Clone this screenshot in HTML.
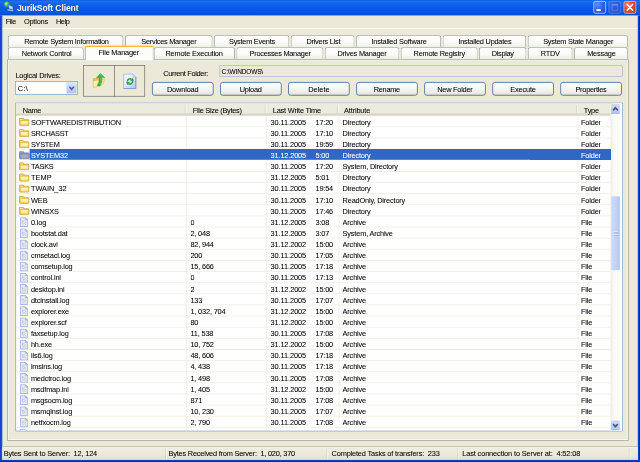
<!DOCTYPE html>
<html><head><meta charset="utf-8"><title>JurikSoft Client</title>
<style>
html,body{margin:0;padding:0;width:640px;height:462px;overflow:hidden;background:#ECE9D8}
#r{position:absolute;left:0;top:0;width:6400px;height:4620px;transform:scale(0.1);transform-origin:0 0;will-change:transform;font-family:'Liberation Sans', 'DejaVu Sans', sans-serif;font-size:70px;overflow:hidden}
#r div,#r svg{position:absolute;display:block}
.t{white-space:pre;-webkit-text-stroke-width:0.6px}
</style></head>
<body>
<div id="r">
<div style="left:0px;top:0px;width:6400px;height:154px;background:linear-gradient(to bottom,#0C56DE 0%,#1F74F2 7%,#1568EE 18%,#0B5FE8 35%,#0759E3 60%,#0657E2 85%,#0547CA 100%)"></div>
<div style="left:0px;top:154px;width:23px;height:4466px;background:linear-gradient(to right,#0A2FD2 0%,#1459E6 45%,#0B49D8 100%)"></div>
<div style="left:6378px;top:154px;width:22px;height:4466px;background:linear-gradient(to right,#0B49D8 0%,#0B3BD2 50%,#0419B8 100%)"></div>
<div style="left:0px;top:4598px;width:6400px;height:22px;background:linear-gradient(to bottom,#0B49D8 0%,#0B3BD2 50%,#0419B8 100%)"></div>
<svg style="left:30px;top:8px;width:110px;height:110px" viewBox="0 0 110 110">
<defs><radialGradient id="gl" cx="45%" cy="40%" r="60%"><stop offset="0" stop-color="#3FA8EA"/><stop offset=".6" stop-color="#1E74D6"/><stop offset="1" stop-color="#1450B8"/></radialGradient>
<radialGradient id="gg" cx="45%" cy="40%" r="60%"><stop offset="0" stop-color="#B4F58A"/><stop offset=".6" stop-color="#55C848"/><stop offset="1" stop-color="#2F9E3C"/></radialGradient></defs>
<circle cx="46" cy="46" r="41" fill="url(#gl)"/>
<path d="M10 30 Q22 4 50 6 Q62 10 58 22 Q52 30 46 40 Q44 56 34 62 Q18 52 10 30Z" fill="url(#gg)"/>
<path d="M64 14 Q82 22 86 40 Q78 46 70 38 Q62 28 64 14Z" fill="#1F8E3A"/>
<path d="M30 66 Q40 80 56 84 L52 70 Z" fill="#1846A8"/>
<path d="M58 46 L92 56 L100 84 L62 76Z" fill="#D3E3F8" stroke="#7FA4DC" stroke-width="4"/>
<path d="M44 84 L100 92 L104 102 L48 96Z" fill="#E4EEFB" stroke="#5D83C8" stroke-width="3"/>
</svg>
<div class="t" style="left:169px;top:14.5px;height:120px;line-height:120px;font-size:87px;color:#0A2A80;white-space:pre;font-weight:bold;letter-spacing:-1.74px;opacity:.7;margin-left:5px;margin-top:6px;">JurikSoft Client</div>
<div class="t" style="left:169px;top:14.5px;height:120px;line-height:120px;font-size:87px;color:#fff;white-space:pre;font-weight:bold;letter-spacing:-1.74px;-webkit-text-stroke-width:0;">JurikSoft Client</div>
<div style="left:5934px;top:10px;width:126px;height:126px;background:radial-gradient(circle at 30% 25%,#5C94F5 0%,#2B62E0 50%,#1E4BCB 100%);border:7px solid #DCE6FA;border-radius:20px;box-sizing:border-box"></div>
<div style="left:5964px;top:92px;width:44px;height:18px;background:#fff"></div>
<div style="left:6085px;top:10px;width:126px;height:126px;background:linear-gradient(135deg,#3C6FE6 0%,#2A5BDB 50%,#2450CC 100%);border:7px solid #5F8CEB;border-radius:20px;box-sizing:border-box"></div>
<div style="left:6117px;top:40px;width:64px;height:66px;border:6px solid #6E93E8;border-top-width:14px;box-sizing:border-box"></div>
<div style="left:6236px;top:10px;width:126px;height:126px;background:radial-gradient(circle at 30% 25%,#EE8A68 0%,#E04A26 40%,#C2351A 100%);border:7px solid #F3D9D0;border-radius:20px;box-sizing:border-box"></div>
<svg style="left:6236px;top:10px;width:126px;height:126px" viewBox="0 0 126 126"><path d="M36 34 L90 92 M90 34 L36 92" stroke="#fff" stroke-width="15" stroke-linecap="round"/></svg>
<div class="t" style="left:57px;top:151.5px;height:120px;line-height:120px;font-size:74px;color:#000;white-space:pre;letter-spacing:-4.00px;">File</div>
<div class="t" style="left:239px;top:151.5px;height:120px;line-height:120px;font-size:74px;color:#000;white-space:pre;letter-spacing:-2.00px;">Options</div>
<div class="t" style="left:559px;top:151.5px;height:120px;line-height:120px;font-size:74px;color:#000;white-space:pre;letter-spacing:-4.00px;">Help</div>
<div style="left:23px;top:282px;width:6355px;height:8px;background:#fff"></div>
<div style="left:79px;top:353px;width:1154px;height:123px;background:linear-gradient(to bottom,#FFFFFF 0%,#FAFAF7 55%,#EEEDE3 100%);border:7px solid #939CA0;border-bottom:none;border-radius:22px 22px 0 0;box-sizing:border-box"></div>
<div class="t" style="left:-335.5px;width:2000px;text-align:center;top:357px;height:120px;line-height:120px;font-size:74px;color:#000;white-space:pre;letter-spacing:-2.92px;">Remote System Information</div>
<div style="left:1250px;top:353px;width:875px;height:123px;background:linear-gradient(to bottom,#FFFFFF 0%,#FAFAF7 55%,#EEEDE3 100%);border:7px solid #939CA0;border-bottom:none;border-radius:22px 22px 0 0;box-sizing:border-box"></div>
<div class="t" style="left:688.6px;width:2000px;text-align:center;top:357px;height:120px;line-height:120px;font-size:74px;color:#000;white-space:pre;letter-spacing:-2.90px;">Services Manager</div>
<div style="left:2139px;top:353px;width:754px;height:123px;background:linear-gradient(to bottom,#FFFFFF 0%,#FAFAF7 55%,#EEEDE3 100%);border:7px solid #939CA0;border-bottom:none;border-radius:22px 22px 0 0;box-sizing:border-box"></div>
<div class="t" style="left:1519.2px;width:2000px;text-align:center;top:357px;height:120px;line-height:120px;font-size:74px;color:#000;white-space:pre;letter-spacing:-2.66px;">System Events</div>
<div style="left:2907px;top:353px;width:638px;height:123px;background:linear-gradient(to bottom,#FFFFFF 0%,#FAFAF7 55%,#EEEDE3 100%);border:7px solid #939CA0;border-bottom:none;border-radius:22px 22px 0 0;box-sizing:border-box"></div>
<div class="t" style="left:2233.7px;width:2000px;text-align:center;top:357px;height:120px;line-height:120px;font-size:74px;color:#000;white-space:pre;letter-spacing:-2.67px;">Drivers List</div>
<div style="left:3561px;top:353px;width:850px;height:123px;background:linear-gradient(to bottom,#FFFFFF 0%,#FAFAF7 55%,#EEEDE3 100%);border:7px solid #939CA0;border-bottom:none;border-radius:22px 22px 0 0;box-sizing:border-box"></div>
<div class="t" style="left:2990.5px;width:2000px;text-align:center;top:357px;height:120px;line-height:120px;font-size:74px;color:#000;white-space:pre;letter-spacing:-1.96px;">Installed Software</div>
<div style="left:4426px;top:353px;width:836px;height:123px;background:linear-gradient(to bottom,#FFFFFF 0%,#FAFAF7 55%,#EEEDE3 100%);border:7px solid #939CA0;border-bottom:none;border-radius:22px 22px 0 0;box-sizing:border-box"></div>
<div class="t" style="left:3848.8px;width:2000px;text-align:center;top:357px;height:120px;line-height:120px;font-size:74px;color:#000;white-space:pre;letter-spacing:-2.46px;">Installed Updates</div>
<div style="left:5277px;top:353px;width:1002px;height:123px;background:linear-gradient(to bottom,#FFFFFF 0%,#FAFAF7 55%,#EEEDE3 100%);border:7px solid #939CA0;border-bottom:none;border-radius:22px 22px 0 0;box-sizing:border-box"></div>
<div class="t" style="left:4781.2px;width:2000px;text-align:center;top:357px;height:120px;line-height:120px;font-size:74px;color:#000;white-space:pre;letter-spacing:-2.68px;">System State Manager</div>
<div style="left:79px;top:473px;width:759px;height:121px;background:linear-gradient(to bottom,#FFFFFF 0%,#FAFAF7 55%,#EEEDE3 100%);border:7px solid #939CA0;border-bottom:none;border-radius:22px 22px 0 0;box-sizing:border-box"></div>
<div class="t" style="left:-533.6px;width:2000px;text-align:center;top:476px;height:120px;line-height:120px;font-size:74px;color:#000;white-space:pre;letter-spacing:-2.23px;">Network Control</div>
<div style="left:1538px;top:473px;width:812px;height:121px;background:linear-gradient(to bottom,#FFFFFF 0%,#FAFAF7 55%,#EEEDE3 100%);border:7px solid #939CA0;border-bottom:none;border-radius:22px 22px 0 0;box-sizing:border-box"></div>
<div class="t" style="left:940.5px;width:2000px;text-align:center;top:476px;height:120px;line-height:120px;font-size:74px;color:#000;white-space:pre;letter-spacing:-1.98px;">Remote Execution</div>
<div style="left:2364px;top:473px;width:870px;height:121px;background:linear-gradient(to bottom,#FFFFFF 0%,#FAFAF7 55%,#EEEDE3 100%);border:7px solid #939CA0;border-bottom:none;border-radius:22px 22px 0 0;box-sizing:border-box"></div>
<div class="t" style="left:1801.1px;width:2000px;text-align:center;top:476px;height:120px;line-height:120px;font-size:74px;color:#000;white-space:pre;letter-spacing:-2.77px;">Processes Manager</div>
<div style="left:3247px;top:473px;width:747px;height:121px;background:linear-gradient(to bottom,#FFFFFF 0%,#FAFAF7 55%,#EEEDE3 100%);border:7px solid #939CA0;border-bottom:none;border-radius:22px 22px 0 0;box-sizing:border-box"></div>
<div class="t" style="left:2619.8px;width:2000px;text-align:center;top:476px;height:120px;line-height:120px;font-size:74px;color:#000;white-space:pre;letter-spacing:-2.31px;">Drives Manager</div>
<div style="left:4007px;top:473px;width:769px;height:121px;background:linear-gradient(to bottom,#FFFFFF 0%,#FAFAF7 55%,#EEEDE3 100%);border:7px solid #939CA0;border-bottom:none;border-radius:22px 22px 0 0;box-sizing:border-box"></div>
<div class="t" style="left:3392.2px;width:2000px;text-align:center;top:476px;height:120px;line-height:120px;font-size:74px;color:#000;white-space:pre;letter-spacing:-2.54px;">Remote Registry</div>
<div style="left:4789px;top:473px;width:475px;height:121px;background:linear-gradient(to bottom,#FFFFFF 0%,#FAFAF7 55%,#EEEDE3 100%);border:7px solid #939CA0;border-bottom:none;border-radius:22px 22px 0 0;box-sizing:border-box"></div>
<div class="t" style="left:4027px;width:2000px;text-align:center;top:476px;height:120px;line-height:120px;font-size:74px;color:#000;white-space:pre;letter-spacing:-3.09px;">Display</div>
<div style="left:5278px;top:473px;width:447px;height:121px;background:linear-gradient(to bottom,#FFFFFF 0%,#FAFAF7 55%,#EEEDE3 100%);border:7px solid #939CA0;border-bottom:none;border-radius:22px 22px 0 0;box-sizing:border-box"></div>
<div class="t" style="left:4502.4px;width:2000px;text-align:center;top:476px;height:120px;line-height:120px;font-size:74px;color:#000;white-space:pre;letter-spacing:-2.28px;">RTDV</div>
<div style="left:5740px;top:473px;width:539px;height:121px;background:linear-gradient(to bottom,#FFFFFF 0%,#FAFAF7 55%,#EEEDE3 100%);border:7px solid #939CA0;border-bottom:none;border-radius:22px 22px 0 0;box-sizing:border-box"></div>
<div class="t" style="left:5013.8px;width:2000px;text-align:center;top:476px;height:120px;line-height:120px;font-size:74px;color:#000;white-space:pre;letter-spacing:-2.32px;">Message</div>
<div style="left:72px;top:594px;width:6216px;height:3813px;border:7px solid #98A1A4;box-sizing:border-box;box-shadow:inset 0 0 0 7px #FBFBF8"></div>
<div style="left:849px;top:456px;width:687px;height:150px;background:#FCFCFA;border:7px solid #939CA0;border-bottom:none;border-radius:22px 22px 0 0;box-sizing:border-box"></div>
<div style="left:849px;top:456px;width:687px;height:15px;background:linear-gradient(to bottom,#F0982C,#FFC94A);border-radius:22px 22px 0 0"></div>
<div class="t" style="left:187.3px;width:2000px;text-align:center;top:465.5px;height:120px;line-height:120px;font-size:74px;color:#000;white-space:pre;letter-spacing:-2.40px;">File Manager</div>
<div class="t" style="left:154px;top:694px;height:120px;line-height:120px;font-size:74px;color:#000;white-space:pre;letter-spacing:-2.22px;">Logical Drives:</div>
<div style="left:152px;top:812px;width:628px;height:136px;background:#fff;border:7px solid #7F9DB9;box-sizing:border-box"></div>
<div class="t" style="left:178px;top:824.5px;height:120px;line-height:120px;font-size:74px;color:#000;white-space:pre;letter-spacing:2.48px;">C:\</div>
<div style="left:664px;top:823px;width:105px;height:114px;background:linear-gradient(to bottom,#DCE6FD 0%,#C3D3FB 50%,#AFC3F4 100%);border-radius:10px;border:5px solid #B7C9F7;box-sizing:border-box"></div>
<svg style="left:664px;top:823px;width:105px;height:114px" viewBox="0 0 105 114"><path d="M30 45 L52 70 L75 45" fill="none" stroke="#4D6185" stroke-width="15"/></svg>
<div style="left:831px;top:651px;width:620px;height:315px;border:7px solid #6E6D66;box-sizing:border-box"></div>
<div style="left:1140.5px;top:651px;width:7px;height:315px;background:#6E6D66"></div>
<svg style="left:910px;top:720px;width:160px;height:180px" viewBox="0 0 160 180">
<defs><linearGradient id="fy" x1="0" y1="0" x2="1" y2="1"><stop offset="0" stop-color="#FFFBD8"/><stop offset=".5" stop-color="#FBE98E"/><stop offset="1" stop-color="#F3CC58"/></linearGradient>
<linearGradient id="ga" x1="0" y1="0" x2="1" y2="0"><stop offset="0" stop-color="#1F9A2E"/><stop offset=".6" stop-color="#4CC850"/><stop offset="1" stop-color="#2FA83A"/></linearGradient></defs>
<path d="M18 64 L58 54 L62 62 L110 52 L112 120 L20 160 Z" fill="#EBC04C"/>
<path d="M22 94 L68 80 L74 88 L142 66 L118 128 L24 160 Z" fill="url(#fy)" stroke="#E3B544" stroke-width="4"/>
<path d="M94 14 L137 55 L111 53 Q112 104 90 141 L63 137 Q86 100 85 55 L55 61 Z" fill="url(#ga)" stroke="#1C8428" stroke-width="4"/>
</svg>
<svg style="left:1225px;top:730px;width:150px;height:170px" viewBox="0 0 150 170">
<defs><linearGradient id="pg" x1="0" y1="0" x2="1" y2="1"><stop offset="0" stop-color="#FFFFFF"/><stop offset=".45" stop-color="#E6ECFC"/><stop offset="1" stop-color="#AFC0F2"/></linearGradient></defs>
<path d="M12 11 L104 11 L133 39 L133 155 L12 155 Z" fill="url(#pg)" stroke="#8C9AD6" stroke-width="6"/>
<path d="M104 11 L104 39 L133 39" fill="#D5DEF9" stroke="#8C9AD6" stroke-width="4"/>
<path d="M133 39 L133 155 L12 155" fill="none" stroke="#7584C8" stroke-width="6"/>
<path d="M49.1 86.3 A26 26 0 0 1 89.9 62.7" stroke="#1FA03C" stroke-width="15" fill="none"/><path d="M99.7 48.8 L111.2 77.6 L80.1 76.6 Z" fill="#1FA03C" stroke="#1FA03C" stroke-width="3" stroke-linejoin="round"/>
<path d="M100.9 81.7 A26 26 0 0 1 60.1 105.3" stroke="#1FA03C" stroke-width="15" fill="none"/><path d="M50.3 119.2 L38.8 90.4 L69.9 91.4 Z" fill="#1FA03C" stroke="#1FA03C" stroke-width="3" stroke-linejoin="round"/>
</svg>
<div class="t" style="left:1632px;top:675.5px;height:120px;line-height:120px;font-size:74px;color:#000;white-space:pre;letter-spacing:-3.31px;">Current Folder:</div>
<div style="left:2195px;top:653px;width:4032px;height:114px;border:7px solid #A9B9CB;box-sizing:border-box"></div>
<div class="t" style="left:2216px;top:657.5px;height:120px;line-height:120px;font-size:65px;color:#000;white-space:pre;letter-spacing:-1.43px;">C:\WINDOWS\</div>
<div style="left:1520px;top:820px;width:616px;height:137px;background:linear-gradient(to bottom,#FFFFFF 0%,#F6F5F0 50%,#ECEBE4 85%,#D8D3C6 100%);border:8.5px solid #3F68A2;border-radius:26px;box-sizing:border-box"></div>
<div class="t" style="left:827.2px;width:2000px;text-align:center;top:835.5px;height:120px;line-height:120px;font-size:74px;color:#000;white-space:pre;letter-spacing:-1.64px;">Download</div>
<div style="left:2200.5px;top:820px;width:616px;height:137px;background:linear-gradient(to bottom,#FFFFFF 0%,#F6F5F0 50%,#ECEBE4 85%,#D8D3C6 100%);border:8.5px solid #3F68A2;border-radius:26px;box-sizing:border-box"></div>
<div class="t" style="left:1507.3px;width:2000px;text-align:center;top:835.5px;height:120px;line-height:120px;font-size:74px;color:#000;white-space:pre;letter-spacing:-2.42px;">Upload</div>
<div style="left:2881px;top:820px;width:616px;height:137px;background:linear-gradient(to bottom,#FFFFFF 0%,#F6F5F0 50%,#ECEBE4 85%,#D8D3C6 100%);border:8.5px solid #3F68A2;border-radius:26px;box-sizing:border-box"></div>
<div class="t" style="left:2189.1px;width:2000px;text-align:center;top:835.5px;height:120px;line-height:120px;font-size:74px;color:#000;white-space:pre;letter-spacing:0.18px;">Delete</div>
<div style="left:3561.5px;top:820px;width:616px;height:137px;background:linear-gradient(to bottom,#FFFFFF 0%,#F6F5F0 50%,#ECEBE4 85%,#D8D3C6 100%);border:8.5px solid #3F68A2;border-radius:26px;box-sizing:border-box"></div>
<div class="t" style="left:2867.9px;width:2000px;text-align:center;top:835.5px;height:120px;line-height:120px;font-size:74px;color:#000;white-space:pre;letter-spacing:-3.29px;">Rename</div>
<div style="left:4242px;top:820px;width:616px;height:137px;background:linear-gradient(to bottom,#FFFFFF 0%,#F6F5F0 50%,#ECEBE4 85%,#D8D3C6 100%);border:8.5px solid #3F68A2;border-radius:26px;box-sizing:border-box"></div>
<div class="t" style="left:3548.8px;width:2000px;text-align:center;top:835.5px;height:120px;line-height:120px;font-size:74px;color:#000;white-space:pre;letter-spacing:-2.44px;">New Folder</div>
<div style="left:4922.5px;top:820px;width:616px;height:137px;background:linear-gradient(to bottom,#FFFFFF 0%,#F6F5F0 50%,#ECEBE4 85%,#D8D3C6 100%);border:8.5px solid #3F68A2;border-radius:26px;box-sizing:border-box"></div>
<div class="t" style="left:4229.7px;width:2000px;text-align:center;top:835.5px;height:120px;line-height:120px;font-size:74px;color:#000;white-space:pre;letter-spacing:-1.63px;">Execute</div>
<div style="left:5603px;top:820px;width:616px;height:137px;background:linear-gradient(to bottom,#FFFFFF 0%,#F6F5F0 50%,#ECEBE4 85%,#D8D3C6 100%);border:8.5px solid #3F68A2;border-radius:26px;box-sizing:border-box"></div>
<div class="t" style="left:4909.6px;width:2000px;text-align:center;top:835.5px;height:120px;line-height:120px;font-size:74px;color:#000;white-space:pre;letter-spacing:-2.73px;">Properties</div>
<div style="left:153px;top:1026px;width:6074px;height:3289px;background:#fff;border:8px solid #86A0BE;box-sizing:border-box"></div>
<div style="left:160px;top:1033px;width:5943px;height:123px;background:linear-gradient(to bottom,#EDECDF 0%,#EBEADB 75%,#DCD9C8 88%,#CBC7B8 100%)"></div>
<div class="t" style="left:228px;top:1040.5px;height:120px;line-height:120px;font-size:74px;color:#000;white-space:pre;letter-spacing:-4.00px;">Name</div>
<div class="t" style="left:1928px;top:1040.5px;height:120px;line-height:120px;font-size:74px;color:#000;white-space:pre;letter-spacing:-2.98px;">File Size (Bytes)</div>
<div class="t" style="left:2728px;top:1040.5px;height:120px;line-height:120px;font-size:74px;color:#000;white-space:pre;letter-spacing:-2.18px;">Last Write Time</div>
<div class="t" style="left:3440px;top:1040.5px;height:120px;line-height:120px;font-size:74px;color:#000;white-space:pre;letter-spacing:-1.51px;">Attribute</div>
<div class="t" style="left:5838px;top:1040.5px;height:120px;line-height:120px;font-size:74px;color:#000;white-space:pre;letter-spacing:-2.61px;">Type</div>
<div style="left:1848.5px;top:1050px;width:7px;height:86px;background:#C7C5B2"></div>
<div style="left:1855.5px;top:1050px;width:7px;height:86px;background:#FFFFFF"></div>
<div style="left:2648.5px;top:1050px;width:7px;height:86px;background:#C7C5B2"></div>
<div style="left:2655.5px;top:1050px;width:7px;height:86px;background:#FFFFFF"></div>
<div style="left:3374.5px;top:1050px;width:7px;height:86px;background:#C7C5B2"></div>
<div style="left:3381.5px;top:1050px;width:7px;height:86px;background:#FFFFFF"></div>
<div style="left:5765.5px;top:1050px;width:7px;height:86px;background:#C7C5B2"></div>
<div style="left:5772.5px;top:1050px;width:7px;height:86px;background:#FFFFFF"></div>
<div style="left:1860px;top:1156px;width:8px;height:3152px;background:#EFEDE2"></div>
<div style="left:2661px;top:1156px;width:8px;height:3152px;background:#EFEDE2"></div>
<div style="left:3386px;top:1156px;width:8px;height:3152px;background:#EFEDE2"></div>
<div style="left:5776px;top:1156px;width:8px;height:3152px;background:#EFEDE2"></div>
<div style="left:160px;top:1264.3px;width:5943px;height:8px;background:#EFEDE2"></div>
<svg style="left:188px;top:1176.5px;width:108px;height:84px" viewBox="0 0 108 84">
<defs><linearGradient id="fb" x1="0" y1="0" x2="0" y2="1"><stop offset="0" stop-color="#FFFCD6"/><stop offset="1" stop-color="#F9E27E"/></linearGradient></defs>
<path d="M4 15 Q4 4 15 4 L38 4 Q46 4 49 10 L54 19 L93 19 Q103 19 103 29 L103 68 Q103 79 92 79 L15 79 Q4 79 4 68 Z" fill="#E3BE60" stroke="#C99B42" stroke-width="6"/>
<path d="M14 14 L38 14 L42 22 L14 22 Z" fill="url(#fb)" opacity=".8"/>
<rect x="19" y="32" width="75" height="39" rx="4" fill="url(#fb)" stroke="#E0B852" stroke-width="3"/>
</svg>
<div class="t" style="left:309px;top:1160.5px;height:120px;line-height:120px;font-size:74px;color:#000;white-space:pre;letter-spacing:-1.89px;">SOFTWAREDISTRIBUTION</div>
<div class="t" style="left:2706px;top:1160.5px;height:120px;line-height:120px;font-size:74px;color:#000;white-space:pre;letter-spacing:-1.09px;">30.11.2005</div>
<div class="t" style="left:3155px;top:1160.5px;height:120px;line-height:120px;font-size:74px;color:#000;white-space:pre;letter-spacing:-2.00px;">17:20</div>
<div class="t" style="left:3426px;top:1160.5px;height:120px;line-height:120px;font-size:74px;color:#000;white-space:pre;letter-spacing:-1.78px;">Directory</div>
<div style="left:5810px;top:1160.5px;width:194px;height:120px;overflow:hidden"><div class="t" style="left:0;top:0;height:120px;line-height:120px;font-size:74px;letter-spacing:-1.5px;color:#000;white-space:pre">Folder</div></div>
<div style="left:160px;top:1375.6px;width:5943px;height:8px;background:#EFEDE2"></div>
<svg style="left:188px;top:1287.8px;width:108px;height:84px" viewBox="0 0 108 84">
<defs><linearGradient id="fb" x1="0" y1="0" x2="0" y2="1"><stop offset="0" stop-color="#FFFCD6"/><stop offset="1" stop-color="#F9E27E"/></linearGradient></defs>
<path d="M4 15 Q4 4 15 4 L38 4 Q46 4 49 10 L54 19 L93 19 Q103 19 103 29 L103 68 Q103 79 92 79 L15 79 Q4 79 4 68 Z" fill="#E3BE60" stroke="#C99B42" stroke-width="6"/>
<path d="M14 14 L38 14 L42 22 L14 22 Z" fill="url(#fb)" opacity=".8"/>
<rect x="19" y="32" width="75" height="39" rx="4" fill="url(#fb)" stroke="#E0B852" stroke-width="3"/>
</svg>
<div class="t" style="left:309px;top:1271.8px;height:120px;line-height:120px;font-size:74px;color:#000;white-space:pre;letter-spacing:-3.49px;">SRCHASST</div>
<div class="t" style="left:2706px;top:1271.8px;height:120px;line-height:120px;font-size:74px;color:#000;white-space:pre;letter-spacing:-1.09px;">30.11.2005</div>
<div class="t" style="left:3155px;top:1271.8px;height:120px;line-height:120px;font-size:74px;color:#000;white-space:pre;letter-spacing:-2.00px;">17:10</div>
<div class="t" style="left:3426px;top:1271.8px;height:120px;line-height:120px;font-size:74px;color:#000;white-space:pre;letter-spacing:-1.78px;">Directory</div>
<div style="left:5810px;top:1271.8px;width:194px;height:120px;overflow:hidden"><div class="t" style="left:0;top:0;height:120px;line-height:120px;font-size:74px;letter-spacing:-1.5px;color:#000;white-space:pre">Folder</div></div>
<div style="left:160px;top:1486.9px;width:5943px;height:8px;background:#EFEDE2"></div>
<svg style="left:188px;top:1399.1px;width:108px;height:84px" viewBox="0 0 108 84">
<defs><linearGradient id="fb" x1="0" y1="0" x2="0" y2="1"><stop offset="0" stop-color="#FFFCD6"/><stop offset="1" stop-color="#F9E27E"/></linearGradient></defs>
<path d="M4 15 Q4 4 15 4 L38 4 Q46 4 49 10 L54 19 L93 19 Q103 19 103 29 L103 68 Q103 79 92 79 L15 79 Q4 79 4 68 Z" fill="#E3BE60" stroke="#C99B42" stroke-width="6"/>
<path d="M14 14 L38 14 L42 22 L14 22 Z" fill="url(#fb)" opacity=".8"/>
<rect x="19" y="32" width="75" height="39" rx="4" fill="url(#fb)" stroke="#E0B852" stroke-width="3"/>
</svg>
<div class="t" style="left:309px;top:1383.1px;height:120px;line-height:120px;font-size:74px;color:#000;white-space:pre;letter-spacing:-2.88px;">SYSTEM</div>
<div class="t" style="left:2706px;top:1383.1px;height:120px;line-height:120px;font-size:74px;color:#000;white-space:pre;letter-spacing:-1.09px;">30.11.2005</div>
<div class="t" style="left:3155px;top:1383.1px;height:120px;line-height:120px;font-size:74px;color:#000;white-space:pre;letter-spacing:-2.00px;">19:59</div>
<div class="t" style="left:3426px;top:1383.1px;height:120px;line-height:120px;font-size:74px;color:#000;white-space:pre;letter-spacing:-1.78px;">Directory</div>
<div style="left:5810px;top:1383.1px;width:194px;height:120px;overflow:hidden"><div class="t" style="left:0;top:0;height:120px;line-height:120px;font-size:74px;letter-spacing:-1.5px;color:#000;white-space:pre">Folder</div></div>
<div style="left:296px;top:1491.9px;width:5807px;height:107.3px;background:#2F67C4"></div>
<svg style="left:188px;top:1510.4px;width:108px;height:84px" viewBox="0 0 108 84">
<defs><linearGradient id="fb" x1="0" y1="0" x2="0" y2="1"><stop offset="0" stop-color="#FFFCD6"/><stop offset="1" stop-color="#F9E27E"/></linearGradient></defs>
<path d="M4 15 Q4 4 15 4 L38 4 Q46 4 49 10 L54 19 L93 19 Q103 19 103 29 L103 68 Q103 79 92 79 L15 79 Q4 79 4 68 Z" fill="#7C8CA8" stroke="#5F7090" stroke-width="6"/>
<path d="M14 14 L38 14 L42 22 L14 22 Z" fill="#A3AFC3" opacity=".8"/>
<rect x="19" y="32" width="75" height="39" rx="4" fill="#A3AFC3" stroke="#8493AC" stroke-width="3"/>
</svg>
<div class="t" style="left:309px;top:1494.4px;height:120px;line-height:120px;font-size:74px;color:#fff;white-space:pre;letter-spacing:-2.20px;">SYSTEM32</div>
<div class="t" style="left:2706px;top:1494.4px;height:120px;line-height:120px;font-size:74px;color:#fff;white-space:pre;letter-spacing:-1.64px;">31.12.2005</div>
<div class="t" style="left:3155px;top:1494.4px;height:120px;line-height:120px;font-size:74px;color:#fff;white-space:pre;letter-spacing:-1.95px;">5:00</div>
<div class="t" style="left:3426px;top:1494.4px;height:120px;line-height:120px;font-size:74px;color:#fff;white-space:pre;letter-spacing:-1.78px;">Directory</div>
<div style="left:5810px;top:1494.4px;width:194px;height:120px;overflow:hidden"><div class="t" style="left:0;top:0;height:120px;line-height:120px;font-size:74px;letter-spacing:-1.5px;color:#fff;white-space:pre">Folder</div></div>
<div style="left:160px;top:1709.5px;width:5943px;height:8px;background:#EFEDE2"></div>
<svg style="left:188px;top:1621.7px;width:108px;height:84px" viewBox="0 0 108 84">
<defs><linearGradient id="fb" x1="0" y1="0" x2="0" y2="1"><stop offset="0" stop-color="#FFFCD6"/><stop offset="1" stop-color="#F9E27E"/></linearGradient></defs>
<path d="M4 15 Q4 4 15 4 L38 4 Q46 4 49 10 L54 19 L93 19 Q103 19 103 29 L103 68 Q103 79 92 79 L15 79 Q4 79 4 68 Z" fill="#E3BE60" stroke="#C99B42" stroke-width="6"/>
<path d="M14 14 L38 14 L42 22 L14 22 Z" fill="url(#fb)" opacity=".8"/>
<rect x="19" y="32" width="75" height="39" rx="4" fill="url(#fb)" stroke="#E0B852" stroke-width="3"/>
</svg>
<div class="t" style="left:309px;top:1605.7px;height:120px;line-height:120px;font-size:74px;color:#000;white-space:pre;letter-spacing:-2.03px;">TASKS</div>
<div class="t" style="left:2706px;top:1605.7px;height:120px;line-height:120px;font-size:74px;color:#000;white-space:pre;letter-spacing:-1.09px;">30.11.2005</div>
<div class="t" style="left:3155px;top:1605.7px;height:120px;line-height:120px;font-size:74px;color:#000;white-space:pre;letter-spacing:-2.00px;">17:20</div>
<div class="t" style="left:3426px;top:1605.7px;height:120px;line-height:120px;font-size:74px;color:#000;white-space:pre;letter-spacing:-1.86px;">System, Directory</div>
<div style="left:5810px;top:1605.7px;width:194px;height:120px;overflow:hidden"><div class="t" style="left:0;top:0;height:120px;line-height:120px;font-size:74px;letter-spacing:-1.5px;color:#000;white-space:pre">Folder</div></div>
<div style="left:160px;top:1820.8px;width:5943px;height:8px;background:#EFEDE2"></div>
<svg style="left:188px;top:1733px;width:108px;height:84px" viewBox="0 0 108 84">
<defs><linearGradient id="fb" x1="0" y1="0" x2="0" y2="1"><stop offset="0" stop-color="#FFFCD6"/><stop offset="1" stop-color="#F9E27E"/></linearGradient></defs>
<path d="M4 15 Q4 4 15 4 L38 4 Q46 4 49 10 L54 19 L93 19 Q103 19 103 29 L103 68 Q103 79 92 79 L15 79 Q4 79 4 68 Z" fill="#E3BE60" stroke="#C99B42" stroke-width="6"/>
<path d="M14 14 L38 14 L42 22 L14 22 Z" fill="url(#fb)" opacity=".8"/>
<rect x="19" y="32" width="75" height="39" rx="4" fill="url(#fb)" stroke="#E0B852" stroke-width="3"/>
</svg>
<div class="t" style="left:309px;top:1717px;height:120px;line-height:120px;font-size:74px;color:#000;white-space:pre;letter-spacing:0.36px;">TEMP</div>
<div class="t" style="left:2706px;top:1717px;height:120px;line-height:120px;font-size:74px;color:#000;white-space:pre;letter-spacing:-1.64px;">31.12.2005</div>
<div class="t" style="left:3155px;top:1717px;height:120px;line-height:120px;font-size:74px;color:#000;white-space:pre;letter-spacing:-1.95px;">5:01</div>
<div class="t" style="left:3426px;top:1717px;height:120px;line-height:120px;font-size:74px;color:#000;white-space:pre;letter-spacing:-1.78px;">Directory</div>
<div style="left:5810px;top:1717px;width:194px;height:120px;overflow:hidden"><div class="t" style="left:0;top:0;height:120px;line-height:120px;font-size:74px;letter-spacing:-1.5px;color:#000;white-space:pre">Folder</div></div>
<div style="left:160px;top:1932.1px;width:5943px;height:8px;background:#EFEDE2"></div>
<svg style="left:188px;top:1844.3px;width:108px;height:84px" viewBox="0 0 108 84">
<defs><linearGradient id="fb" x1="0" y1="0" x2="0" y2="1"><stop offset="0" stop-color="#FFFCD6"/><stop offset="1" stop-color="#F9E27E"/></linearGradient></defs>
<path d="M4 15 Q4 4 15 4 L38 4 Q46 4 49 10 L54 19 L93 19 Q103 19 103 29 L103 68 Q103 79 92 79 L15 79 Q4 79 4 68 Z" fill="#E3BE60" stroke="#C99B42" stroke-width="6"/>
<path d="M14 14 L38 14 L42 22 L14 22 Z" fill="url(#fb)" opacity=".8"/>
<rect x="19" y="32" width="75" height="39" rx="4" fill="url(#fb)" stroke="#E0B852" stroke-width="3"/>
</svg>
<div class="t" style="left:309px;top:1828.3px;height:120px;line-height:120px;font-size:74px;color:#000;white-space:pre;letter-spacing:-0.27px;">TWAIN_32</div>
<div class="t" style="left:2706px;top:1828.3px;height:120px;line-height:120px;font-size:74px;color:#000;white-space:pre;letter-spacing:-1.09px;">30.11.2005</div>
<div class="t" style="left:3155px;top:1828.3px;height:120px;line-height:120px;font-size:74px;color:#000;white-space:pre;letter-spacing:-2.00px;">19:54</div>
<div class="t" style="left:3426px;top:1828.3px;height:120px;line-height:120px;font-size:74px;color:#000;white-space:pre;letter-spacing:-1.78px;">Directory</div>
<div style="left:5810px;top:1828.3px;width:194px;height:120px;overflow:hidden"><div class="t" style="left:0;top:0;height:120px;line-height:120px;font-size:74px;letter-spacing:-1.5px;color:#000;white-space:pre">Folder</div></div>
<div style="left:160px;top:2043.4px;width:5943px;height:8px;background:#EFEDE2"></div>
<svg style="left:188px;top:1955.6px;width:108px;height:84px" viewBox="0 0 108 84">
<defs><linearGradient id="fb" x1="0" y1="0" x2="0" y2="1"><stop offset="0" stop-color="#FFFCD6"/><stop offset="1" stop-color="#F9E27E"/></linearGradient></defs>
<path d="M4 15 Q4 4 15 4 L38 4 Q46 4 49 10 L54 19 L93 19 Q103 19 103 29 L103 68 Q103 79 92 79 L15 79 Q4 79 4 68 Z" fill="#E3BE60" stroke="#C99B42" stroke-width="6"/>
<path d="M14 14 L38 14 L42 22 L14 22 Z" fill="url(#fb)" opacity=".8"/>
<rect x="19" y="32" width="75" height="39" rx="4" fill="url(#fb)" stroke="#E0B852" stroke-width="3"/>
</svg>
<div class="t" style="left:309px;top:1939.6px;height:120px;line-height:120px;font-size:74px;color:#000;white-space:pre;letter-spacing:-0.52px;">WEB</div>
<div class="t" style="left:2706px;top:1939.6px;height:120px;line-height:120px;font-size:74px;color:#000;white-space:pre;letter-spacing:-1.09px;">30.11.2005</div>
<div class="t" style="left:3155px;top:1939.6px;height:120px;line-height:120px;font-size:74px;color:#000;white-space:pre;letter-spacing:-2.00px;">17:10</div>
<div class="t" style="left:3426px;top:1939.6px;height:120px;line-height:120px;font-size:74px;color:#000;white-space:pre;letter-spacing:-1.88px;">ReadOnly, Directory</div>
<div style="left:5810px;top:1939.6px;width:194px;height:120px;overflow:hidden"><div class="t" style="left:0;top:0;height:120px;line-height:120px;font-size:74px;letter-spacing:-1.5px;color:#000;white-space:pre">Folder</div></div>
<div style="left:160px;top:2154.7px;width:5943px;height:8px;background:#EFEDE2"></div>
<svg style="left:188px;top:2066.9px;width:108px;height:84px" viewBox="0 0 108 84">
<defs><linearGradient id="fb" x1="0" y1="0" x2="0" y2="1"><stop offset="0" stop-color="#FFFCD6"/><stop offset="1" stop-color="#F9E27E"/></linearGradient></defs>
<path d="M4 15 Q4 4 15 4 L38 4 Q46 4 49 10 L54 19 L93 19 Q103 19 103 29 L103 68 Q103 79 92 79 L15 79 Q4 79 4 68 Z" fill="#E3BE60" stroke="#C99B42" stroke-width="6"/>
<path d="M14 14 L38 14 L42 22 L14 22 Z" fill="url(#fb)" opacity=".8"/>
<rect x="19" y="32" width="75" height="39" rx="4" fill="url(#fb)" stroke="#E0B852" stroke-width="3"/>
</svg>
<div class="t" style="left:309px;top:2050.9px;height:120px;line-height:120px;font-size:74px;color:#000;white-space:pre;letter-spacing:-2.49px;">WINSXS</div>
<div class="t" style="left:2706px;top:2050.9px;height:120px;line-height:120px;font-size:74px;color:#000;white-space:pre;letter-spacing:-1.09px;">30.11.2005</div>
<div class="t" style="left:3155px;top:2050.9px;height:120px;line-height:120px;font-size:74px;color:#000;white-space:pre;letter-spacing:-2.00px;">17:46</div>
<div class="t" style="left:3426px;top:2050.9px;height:120px;line-height:120px;font-size:74px;color:#000;white-space:pre;letter-spacing:-1.78px;">Directory</div>
<div style="left:5810px;top:2050.9px;width:194px;height:120px;overflow:hidden"><div class="t" style="left:0;top:0;height:120px;line-height:120px;font-size:74px;letter-spacing:-1.5px;color:#000;white-space:pre">Folder</div></div>
<div style="left:160px;top:2266px;width:5943px;height:8px;background:#EFEDE2"></div>
<svg style="left:198px;top:2172.2px;width:84px;height:98px" viewBox="0 0 84 98">
<path d="M5 5 L56 5 L79 28 L79 93 L5 93 Z" fill="#E7EAF4" stroke="#8FA3E2" stroke-width="8"/>
<path d="M56 5 L56 28 L79 28 Z" fill="#AEBBEA" stroke="#8FA3E2" stroke-width="4"/>
<path d="M22 30 L30 44 L24 60 M30 44 L46 40 M28 70 L46 62 L60 74 M50 48 L62 56" fill="none" stroke="#B4B8C6" stroke-width="7"/>
</svg>
<div class="t" style="left:309px;top:2162.2px;height:120px;line-height:120px;font-size:74px;color:#000;white-space:pre;letter-spacing:-1.73px;">0.log</div>
<div class="t" style="left:1904px;top:2162.2px;height:120px;line-height:120px;font-size:74px;color:#000;white-space:pre;letter-spacing:-2.22px;">0</div>
<div class="t" style="left:2706px;top:2162.2px;height:120px;line-height:120px;font-size:74px;color:#000;white-space:pre;letter-spacing:-1.64px;">31.12.2005</div>
<div class="t" style="left:3155px;top:2162.2px;height:120px;line-height:120px;font-size:74px;color:#000;white-space:pre;letter-spacing:-1.95px;">3:08</div>
<div class="t" style="left:3426px;top:2162.2px;height:120px;line-height:120px;font-size:74px;color:#000;white-space:pre;letter-spacing:-1.91px;">Archive</div>
<div style="left:5810px;top:2162.2px;width:194px;height:120px;overflow:hidden"><div class="t" style="left:0;top:0;height:120px;line-height:120px;font-size:74px;letter-spacing:-1.5px;color:#000;white-space:pre">File</div></div>
<div style="left:160px;top:2377.3px;width:5943px;height:8px;background:#EFEDE2"></div>
<svg style="left:198px;top:2283.5px;width:84px;height:98px" viewBox="0 0 84 98">
<path d="M5 5 L56 5 L79 28 L79 93 L5 93 Z" fill="#E7EAF4" stroke="#8FA3E2" stroke-width="8"/>
<path d="M56 5 L56 28 L79 28 Z" fill="#AEBBEA" stroke="#8FA3E2" stroke-width="4"/>
<path d="M22 30 L30 44 L24 60 M30 44 L46 40 M28 70 L46 62 L60 74 M50 48 L62 56" fill="none" stroke="#B4B8C6" stroke-width="7"/>
</svg>
<div class="t" style="left:309px;top:2273.5px;height:120px;line-height:120px;font-size:74px;color:#000;white-space:pre;letter-spacing:-1.74px;">bootstat.dat</div>
<div class="t" style="left:1904px;top:2273.5px;height:120px;line-height:120px;font-size:74px;color:#000;white-space:pre;letter-spacing:-1.85px;">2, 048</div>
<div class="t" style="left:2706px;top:2273.5px;height:120px;line-height:120px;font-size:74px;color:#000;white-space:pre;letter-spacing:-1.64px;">31.12.2005</div>
<div class="t" style="left:3155px;top:2273.5px;height:120px;line-height:120px;font-size:74px;color:#000;white-space:pre;letter-spacing:-1.95px;">3:07</div>
<div class="t" style="left:3426px;top:2273.5px;height:120px;line-height:120px;font-size:74px;color:#000;white-space:pre;letter-spacing:-1.91px;">System, Archive</div>
<div style="left:5810px;top:2273.5px;width:194px;height:120px;overflow:hidden"><div class="t" style="left:0;top:0;height:120px;line-height:120px;font-size:74px;letter-spacing:-1.5px;color:#000;white-space:pre">File</div></div>
<div style="left:160px;top:2488.6px;width:5943px;height:8px;background:#EFEDE2"></div>
<svg style="left:198px;top:2394.8px;width:84px;height:98px" viewBox="0 0 84 98">
<path d="M5 5 L56 5 L79 28 L79 93 L5 93 Z" fill="#E7EAF4" stroke="#8FA3E2" stroke-width="8"/>
<path d="M56 5 L56 28 L79 28 Z" fill="#AEBBEA" stroke="#8FA3E2" stroke-width="4"/>
<path d="M22 30 L30 44 L24 60 M30 44 L46 40 M28 70 L46 62 L60 74 M50 48 L62 56" fill="none" stroke="#B4B8C6" stroke-width="7"/>
</svg>
<div class="t" style="left:309px;top:2384.8px;height:120px;line-height:120px;font-size:74px;color:#000;white-space:pre;letter-spacing:-1.70px;">clock.avi</div>
<div class="t" style="left:1904px;top:2384.8px;height:120px;line-height:120px;font-size:74px;color:#000;white-space:pre;letter-spacing:-1.91px;">82, 944</div>
<div class="t" style="left:2706px;top:2384.8px;height:120px;line-height:120px;font-size:74px;color:#000;white-space:pre;letter-spacing:-1.64px;">31.12.2002</div>
<div class="t" style="left:3155px;top:2384.8px;height:120px;line-height:120px;font-size:74px;color:#000;white-space:pre;letter-spacing:-2.00px;">15:00</div>
<div class="t" style="left:3426px;top:2384.8px;height:120px;line-height:120px;font-size:74px;color:#000;white-space:pre;letter-spacing:-1.91px;">Archive</div>
<div style="left:5810px;top:2384.8px;width:194px;height:120px;overflow:hidden"><div class="t" style="left:0;top:0;height:120px;line-height:120px;font-size:74px;letter-spacing:-1.5px;color:#000;white-space:pre">File</div></div>
<div style="left:160px;top:2599.9px;width:5943px;height:8px;background:#EFEDE2"></div>
<svg style="left:198px;top:2506.1px;width:84px;height:98px" viewBox="0 0 84 98">
<path d="M5 5 L56 5 L79 28 L79 93 L5 93 Z" fill="#E7EAF4" stroke="#8FA3E2" stroke-width="8"/>
<path d="M56 5 L56 28 L79 28 Z" fill="#AEBBEA" stroke="#8FA3E2" stroke-width="4"/>
<path d="M22 30 L30 44 L24 60 M30 44 L46 40 M28 70 L46 62 L60 74 M50 48 L62 56" fill="none" stroke="#B4B8C6" stroke-width="7"/>
</svg>
<div class="t" style="left:309px;top:2496.1px;height:120px;line-height:120px;font-size:74px;color:#000;white-space:pre;letter-spacing:-1.85px;">cmsetacl.log</div>
<div class="t" style="left:1904px;top:2496.1px;height:120px;line-height:120px;font-size:74px;color:#000;white-space:pre;letter-spacing:-2.22px;">200</div>
<div class="t" style="left:2706px;top:2496.1px;height:120px;line-height:120px;font-size:74px;color:#000;white-space:pre;letter-spacing:-1.09px;">30.11.2005</div>
<div class="t" style="left:3155px;top:2496.1px;height:120px;line-height:120px;font-size:74px;color:#000;white-space:pre;letter-spacing:-2.00px;">17:05</div>
<div class="t" style="left:3426px;top:2496.1px;height:120px;line-height:120px;font-size:74px;color:#000;white-space:pre;letter-spacing:-1.91px;">Archive</div>
<div style="left:5810px;top:2496.1px;width:194px;height:120px;overflow:hidden"><div class="t" style="left:0;top:0;height:120px;line-height:120px;font-size:74px;letter-spacing:-1.5px;color:#000;white-space:pre">File</div></div>
<div style="left:160px;top:2711.2px;width:5943px;height:8px;background:#EFEDE2"></div>
<svg style="left:198px;top:2617.4px;width:84px;height:98px" viewBox="0 0 84 98">
<path d="M5 5 L56 5 L79 28 L79 93 L5 93 Z" fill="#E7EAF4" stroke="#8FA3E2" stroke-width="8"/>
<path d="M56 5 L56 28 L79 28 Z" fill="#AEBBEA" stroke="#8FA3E2" stroke-width="4"/>
<path d="M22 30 L30 44 L24 60 M30 44 L46 40 M28 70 L46 62 L60 74 M50 48 L62 56" fill="none" stroke="#B4B8C6" stroke-width="7"/>
</svg>
<div class="t" style="left:309px;top:2607.4px;height:120px;line-height:120px;font-size:74px;color:#000;white-space:pre;letter-spacing:-1.98px;">comsetup.log</div>
<div class="t" style="left:1904px;top:2607.4px;height:120px;line-height:120px;font-size:74px;color:#000;white-space:pre;letter-spacing:-1.91px;">15, 666</div>
<div class="t" style="left:2706px;top:2607.4px;height:120px;line-height:120px;font-size:74px;color:#000;white-space:pre;letter-spacing:-1.09px;">30.11.2005</div>
<div class="t" style="left:3155px;top:2607.4px;height:120px;line-height:120px;font-size:74px;color:#000;white-space:pre;letter-spacing:-2.00px;">17:18</div>
<div class="t" style="left:3426px;top:2607.4px;height:120px;line-height:120px;font-size:74px;color:#000;white-space:pre;letter-spacing:-1.91px;">Archive</div>
<div style="left:5810px;top:2607.4px;width:194px;height:120px;overflow:hidden"><div class="t" style="left:0;top:0;height:120px;line-height:120px;font-size:74px;letter-spacing:-1.5px;color:#000;white-space:pre">File</div></div>
<div style="left:160px;top:2822.5px;width:5943px;height:8px;background:#EFEDE2"></div>
<svg style="left:198px;top:2728.7px;width:84px;height:98px" viewBox="0 0 84 98">
<path d="M5 5 L56 5 L79 28 L79 93 L5 93 Z" fill="#E7EAF4" stroke="#8FA3E2" stroke-width="8"/>
<path d="M56 5 L56 28 L79 28 Z" fill="#AEBBEA" stroke="#8FA3E2" stroke-width="4"/>
<path d="M22 30 L30 44 L24 60 M30 44 L46 40 M28 70 L46 62 L60 74 M50 48 L62 56" fill="none" stroke="#B4B8C6" stroke-width="7"/>
</svg>
<div class="t" style="left:309px;top:2718.7px;height:120px;line-height:120px;font-size:74px;color:#000;white-space:pre;letter-spacing:-1.56px;">control.ini</div>
<div class="t" style="left:1904px;top:2718.7px;height:120px;line-height:120px;font-size:74px;color:#000;white-space:pre;letter-spacing:-2.22px;">0</div>
<div class="t" style="left:2706px;top:2718.7px;height:120px;line-height:120px;font-size:74px;color:#000;white-space:pre;letter-spacing:-1.09px;">30.11.2005</div>
<div class="t" style="left:3155px;top:2718.7px;height:120px;line-height:120px;font-size:74px;color:#000;white-space:pre;letter-spacing:-2.00px;">17:13</div>
<div class="t" style="left:3426px;top:2718.7px;height:120px;line-height:120px;font-size:74px;color:#000;white-space:pre;letter-spacing:-1.91px;">Archive</div>
<div style="left:5810px;top:2718.7px;width:194px;height:120px;overflow:hidden"><div class="t" style="left:0;top:0;height:120px;line-height:120px;font-size:74px;letter-spacing:-1.5px;color:#000;white-space:pre">File</div></div>
<div style="left:160px;top:2933.8px;width:5943px;height:8px;background:#EFEDE2"></div>
<svg style="left:198px;top:2840px;width:84px;height:98px" viewBox="0 0 84 98">
<path d="M5 5 L56 5 L79 28 L79 93 L5 93 Z" fill="#E7EAF4" stroke="#8FA3E2" stroke-width="8"/>
<path d="M56 5 L56 28 L79 28 Z" fill="#AEBBEA" stroke="#8FA3E2" stroke-width="4"/>
<path d="M22 30 L30 44 L24 60 M30 44 L46 40 M28 70 L46 62 L60 74 M50 48 L62 56" fill="none" stroke="#B4B8C6" stroke-width="7"/>
</svg>
<div class="t" style="left:309px;top:2830px;height:120px;line-height:120px;font-size:74px;color:#000;white-space:pre;letter-spacing:-1.74px;">desktop.ini</div>
<div class="t" style="left:1904px;top:2830px;height:120px;line-height:120px;font-size:74px;color:#000;white-space:pre;letter-spacing:-2.22px;">2</div>
<div class="t" style="left:2706px;top:2830px;height:120px;line-height:120px;font-size:74px;color:#000;white-space:pre;letter-spacing:-1.64px;">31.12.2002</div>
<div class="t" style="left:3155px;top:2830px;height:120px;line-height:120px;font-size:74px;color:#000;white-space:pre;letter-spacing:-2.00px;">15:00</div>
<div class="t" style="left:3426px;top:2830px;height:120px;line-height:120px;font-size:74px;color:#000;white-space:pre;letter-spacing:-1.91px;">Archive</div>
<div style="left:5810px;top:2830px;width:194px;height:120px;overflow:hidden"><div class="t" style="left:0;top:0;height:120px;line-height:120px;font-size:74px;letter-spacing:-1.5px;color:#000;white-space:pre">File</div></div>
<div style="left:160px;top:3045.1px;width:5943px;height:8px;background:#EFEDE2"></div>
<svg style="left:198px;top:2951.3px;width:84px;height:98px" viewBox="0 0 84 98">
<path d="M5 5 L56 5 L79 28 L79 93 L5 93 Z" fill="#E7EAF4" stroke="#8FA3E2" stroke-width="8"/>
<path d="M56 5 L56 28 L79 28 Z" fill="#AEBBEA" stroke="#8FA3E2" stroke-width="4"/>
<path d="M22 30 L30 44 L24 60 M30 44 L46 40 M28 70 L46 62 L60 74 M50 48 L62 56" fill="none" stroke="#B4B8C6" stroke-width="7"/>
</svg>
<div class="t" style="left:309px;top:2941.3px;height:120px;line-height:120px;font-size:74px;color:#000;white-space:pre;letter-spacing:-1.57px;">dtcinstall.log</div>
<div class="t" style="left:1904px;top:2941.3px;height:120px;line-height:120px;font-size:74px;color:#000;white-space:pre;letter-spacing:-2.22px;">133</div>
<div class="t" style="left:2706px;top:2941.3px;height:120px;line-height:120px;font-size:74px;color:#000;white-space:pre;letter-spacing:-1.09px;">30.11.2005</div>
<div class="t" style="left:3155px;top:2941.3px;height:120px;line-height:120px;font-size:74px;color:#000;white-space:pre;letter-spacing:-2.00px;">17:07</div>
<div class="t" style="left:3426px;top:2941.3px;height:120px;line-height:120px;font-size:74px;color:#000;white-space:pre;letter-spacing:-1.91px;">Archive</div>
<div style="left:5810px;top:2941.3px;width:194px;height:120px;overflow:hidden"><div class="t" style="left:0;top:0;height:120px;line-height:120px;font-size:74px;letter-spacing:-1.5px;color:#000;white-space:pre">File</div></div>
<div style="left:160px;top:3156.4px;width:5943px;height:8px;background:#EFEDE2"></div>
<svg style="left:198px;top:3062.6px;width:84px;height:98px" viewBox="0 0 84 98">
<path d="M5 5 L56 5 L79 28 L79 93 L5 93 Z" fill="#E7EAF4" stroke="#8FA3E2" stroke-width="8"/>
<path d="M56 5 L56 28 L79 28 Z" fill="#AEBBEA" stroke="#8FA3E2" stroke-width="4"/>
<path d="M22 30 L30 44 L24 60 M30 44 L46 40 M28 70 L46 62 L60 74 M50 48 L62 56" fill="none" stroke="#B4B8C6" stroke-width="7"/>
</svg>
<div class="t" style="left:309px;top:3052.6px;height:120px;line-height:120px;font-size:74px;color:#000;white-space:pre;letter-spacing:-1.82px;">explorer.exe</div>
<div class="t" style="left:1904px;top:3052.6px;height:120px;line-height:120px;font-size:74px;color:#000;white-space:pre;letter-spacing:-1.82px;">1, 032, 704</div>
<div class="t" style="left:2706px;top:3052.6px;height:120px;line-height:120px;font-size:74px;color:#000;white-space:pre;letter-spacing:-1.64px;">31.12.2002</div>
<div class="t" style="left:3155px;top:3052.6px;height:120px;line-height:120px;font-size:74px;color:#000;white-space:pre;letter-spacing:-2.00px;">15:00</div>
<div class="t" style="left:3426px;top:3052.6px;height:120px;line-height:120px;font-size:74px;color:#000;white-space:pre;letter-spacing:-1.91px;">Archive</div>
<div style="left:5810px;top:3052.6px;width:194px;height:120px;overflow:hidden"><div class="t" style="left:0;top:0;height:120px;line-height:120px;font-size:74px;letter-spacing:-1.5px;color:#000;white-space:pre">File</div></div>
<div style="left:160px;top:3267.7px;width:5943px;height:8px;background:#EFEDE2"></div>
<svg style="left:198px;top:3173.9px;width:84px;height:98px" viewBox="0 0 84 98">
<path d="M5 5 L56 5 L79 28 L79 93 L5 93 Z" fill="#E7EAF4" stroke="#8FA3E2" stroke-width="8"/>
<path d="M56 5 L56 28 L79 28 Z" fill="#AEBBEA" stroke="#8FA3E2" stroke-width="4"/>
<path d="M22 30 L30 44 L24 60 M30 44 L46 40 M28 70 L46 62 L60 74 M50 48 L62 56" fill="none" stroke="#B4B8C6" stroke-width="7"/>
</svg>
<div class="t" style="left:309px;top:3163.9px;height:120px;line-height:120px;font-size:74px;color:#000;white-space:pre;letter-spacing:-1.70px;">explorer.scf</div>
<div class="t" style="left:1904px;top:3163.9px;height:120px;line-height:120px;font-size:74px;color:#000;white-space:pre;letter-spacing:-2.22px;">80</div>
<div class="t" style="left:2706px;top:3163.9px;height:120px;line-height:120px;font-size:74px;color:#000;white-space:pre;letter-spacing:-1.64px;">31.12.2002</div>
<div class="t" style="left:3155px;top:3163.9px;height:120px;line-height:120px;font-size:74px;color:#000;white-space:pre;letter-spacing:-2.00px;">15:00</div>
<div class="t" style="left:3426px;top:3163.9px;height:120px;line-height:120px;font-size:74px;color:#000;white-space:pre;letter-spacing:-1.91px;">Archive</div>
<div style="left:5810px;top:3163.9px;width:194px;height:120px;overflow:hidden"><div class="t" style="left:0;top:0;height:120px;line-height:120px;font-size:74px;letter-spacing:-1.5px;color:#000;white-space:pre">File</div></div>
<div style="left:160px;top:3379px;width:5943px;height:8px;background:#EFEDE2"></div>
<svg style="left:198px;top:3285.2px;width:84px;height:98px" viewBox="0 0 84 98">
<path d="M5 5 L56 5 L79 28 L79 93 L5 93 Z" fill="#E7EAF4" stroke="#8FA3E2" stroke-width="8"/>
<path d="M56 5 L56 28 L79 28 Z" fill="#AEBBEA" stroke="#8FA3E2" stroke-width="4"/>
<path d="M22 30 L30 44 L24 60 M30 44 L46 40 M28 70 L46 62 L60 74 M50 48 L62 56" fill="none" stroke="#B4B8C6" stroke-width="7"/>
</svg>
<div class="t" style="left:309px;top:3275.2px;height:120px;line-height:120px;font-size:74px;color:#000;white-space:pre;letter-spacing:-1.80px;">faxsetup.log</div>
<div class="t" style="left:1904px;top:3275.2px;height:120px;line-height:120px;font-size:74px;color:#000;white-space:pre;letter-spacing:-1.86px;">11, 538</div>
<div class="t" style="left:2706px;top:3275.2px;height:120px;line-height:120px;font-size:74px;color:#000;white-space:pre;letter-spacing:-1.09px;">30.11.2005</div>
<div class="t" style="left:3155px;top:3275.2px;height:120px;line-height:120px;font-size:74px;color:#000;white-space:pre;letter-spacing:-2.00px;">17:08</div>
<div class="t" style="left:3426px;top:3275.2px;height:120px;line-height:120px;font-size:74px;color:#000;white-space:pre;letter-spacing:-1.91px;">Archive</div>
<div style="left:5810px;top:3275.2px;width:194px;height:120px;overflow:hidden"><div class="t" style="left:0;top:0;height:120px;line-height:120px;font-size:74px;letter-spacing:-1.5px;color:#000;white-space:pre">File</div></div>
<div style="left:160px;top:3490.3px;width:5943px;height:8px;background:#EFEDE2"></div>
<svg style="left:198px;top:3396.5px;width:84px;height:98px" viewBox="0 0 84 98">
<path d="M5 5 L56 5 L79 28 L79 93 L5 93 Z" fill="#E7EAF4" stroke="#8FA3E2" stroke-width="8"/>
<path d="M56 5 L56 28 L79 28 Z" fill="#AEBBEA" stroke="#8FA3E2" stroke-width="4"/>
<path d="M22 30 L30 44 L24 60 M30 44 L46 40 M28 70 L46 62 L60 74 M50 48 L62 56" fill="none" stroke="#B4B8C6" stroke-width="7"/>
</svg>
<div class="t" style="left:309px;top:3386.5px;height:120px;line-height:120px;font-size:74px;color:#000;white-space:pre;letter-spacing:-2.00px;">hh.exe</div>
<div class="t" style="left:1904px;top:3386.5px;height:120px;line-height:120px;font-size:74px;color:#000;white-space:pre;letter-spacing:-1.91px;">10, 752</div>
<div class="t" style="left:2706px;top:3386.5px;height:120px;line-height:120px;font-size:74px;color:#000;white-space:pre;letter-spacing:-1.64px;">31.12.2002</div>
<div class="t" style="left:3155px;top:3386.5px;height:120px;line-height:120px;font-size:74px;color:#000;white-space:pre;letter-spacing:-2.00px;">15:00</div>
<div class="t" style="left:3426px;top:3386.5px;height:120px;line-height:120px;font-size:74px;color:#000;white-space:pre;letter-spacing:-1.91px;">Archive</div>
<div style="left:5810px;top:3386.5px;width:194px;height:120px;overflow:hidden"><div class="t" style="left:0;top:0;height:120px;line-height:120px;font-size:74px;letter-spacing:-1.5px;color:#000;white-space:pre">File</div></div>
<div style="left:160px;top:3601.6px;width:5943px;height:8px;background:#EFEDE2"></div>
<svg style="left:198px;top:3507.8px;width:84px;height:98px" viewBox="0 0 84 98">
<path d="M5 5 L56 5 L79 28 L79 93 L5 93 Z" fill="#E7EAF4" stroke="#8FA3E2" stroke-width="8"/>
<path d="M56 5 L56 28 L79 28 Z" fill="#AEBBEA" stroke="#8FA3E2" stroke-width="4"/>
<path d="M22 30 L30 44 L24 60 M30 44 L46 40 M28 70 L46 62 L60 74 M50 48 L62 56" fill="none" stroke="#B4B8C6" stroke-width="7"/>
</svg>
<div class="t" style="left:309px;top:3497.8px;height:120px;line-height:120px;font-size:74px;color:#000;white-space:pre;letter-spacing:-1.56px;">iis6.log</div>
<div class="t" style="left:1904px;top:3497.8px;height:120px;line-height:120px;font-size:74px;color:#000;white-space:pre;letter-spacing:-1.91px;">48, 606</div>
<div class="t" style="left:2706px;top:3497.8px;height:120px;line-height:120px;font-size:74px;color:#000;white-space:pre;letter-spacing:-1.09px;">30.11.2005</div>
<div class="t" style="left:3155px;top:3497.8px;height:120px;line-height:120px;font-size:74px;color:#000;white-space:pre;letter-spacing:-2.00px;">17:18</div>
<div class="t" style="left:3426px;top:3497.8px;height:120px;line-height:120px;font-size:74px;color:#000;white-space:pre;letter-spacing:-1.91px;">Archive</div>
<div style="left:5810px;top:3497.8px;width:194px;height:120px;overflow:hidden"><div class="t" style="left:0;top:0;height:120px;line-height:120px;font-size:74px;letter-spacing:-1.5px;color:#000;white-space:pre">File</div></div>
<div style="left:160px;top:3712.9px;width:5943px;height:8px;background:#EFEDE2"></div>
<svg style="left:198px;top:3619.1px;width:84px;height:98px" viewBox="0 0 84 98">
<path d="M5 5 L56 5 L79 28 L79 93 L5 93 Z" fill="#E7EAF4" stroke="#8FA3E2" stroke-width="8"/>
<path d="M56 5 L56 28 L79 28 Z" fill="#AEBBEA" stroke="#8FA3E2" stroke-width="4"/>
<path d="M22 30 L30 44 L24 60 M30 44 L46 40 M28 70 L46 62 L60 74 M50 48 L62 56" fill="none" stroke="#B4B8C6" stroke-width="7"/>
</svg>
<div class="t" style="left:309px;top:3609.1px;height:120px;line-height:120px;font-size:74px;color:#000;white-space:pre;letter-spacing:-1.78px;">imsins.log</div>
<div class="t" style="left:1904px;top:3609.1px;height:120px;line-height:120px;font-size:74px;color:#000;white-space:pre;letter-spacing:-1.85px;">4, 438</div>
<div class="t" style="left:2706px;top:3609.1px;height:120px;line-height:120px;font-size:74px;color:#000;white-space:pre;letter-spacing:-1.09px;">30.11.2005</div>
<div class="t" style="left:3155px;top:3609.1px;height:120px;line-height:120px;font-size:74px;color:#000;white-space:pre;letter-spacing:-2.00px;">17:18</div>
<div class="t" style="left:3426px;top:3609.1px;height:120px;line-height:120px;font-size:74px;color:#000;white-space:pre;letter-spacing:-1.91px;">Archive</div>
<div style="left:5810px;top:3609.1px;width:194px;height:120px;overflow:hidden"><div class="t" style="left:0;top:0;height:120px;line-height:120px;font-size:74px;letter-spacing:-1.5px;color:#000;white-space:pre">File</div></div>
<div style="left:160px;top:3824.2px;width:5943px;height:8px;background:#EFEDE2"></div>
<svg style="left:198px;top:3730.4px;width:84px;height:98px" viewBox="0 0 84 98">
<path d="M5 5 L56 5 L79 28 L79 93 L5 93 Z" fill="#E7EAF4" stroke="#8FA3E2" stroke-width="8"/>
<path d="M56 5 L56 28 L79 28 Z" fill="#AEBBEA" stroke="#8FA3E2" stroke-width="4"/>
<path d="M22 30 L30 44 L24 60 M30 44 L46 40 M28 70 L46 62 L60 74 M50 48 L62 56" fill="none" stroke="#B4B8C6" stroke-width="7"/>
</svg>
<div class="t" style="left:309px;top:3720.4px;height:120px;line-height:120px;font-size:74px;color:#000;white-space:pre;letter-spacing:-1.91px;">medctroc.log</div>
<div class="t" style="left:1904px;top:3720.4px;height:120px;line-height:120px;font-size:74px;color:#000;white-space:pre;letter-spacing:-1.85px;">1, 498</div>
<div class="t" style="left:2706px;top:3720.4px;height:120px;line-height:120px;font-size:74px;color:#000;white-space:pre;letter-spacing:-1.09px;">30.11.2005</div>
<div class="t" style="left:3155px;top:3720.4px;height:120px;line-height:120px;font-size:74px;color:#000;white-space:pre;letter-spacing:-2.00px;">17:08</div>
<div class="t" style="left:3426px;top:3720.4px;height:120px;line-height:120px;font-size:74px;color:#000;white-space:pre;letter-spacing:-1.91px;">Archive</div>
<div style="left:5810px;top:3720.4px;width:194px;height:120px;overflow:hidden"><div class="t" style="left:0;top:0;height:120px;line-height:120px;font-size:74px;letter-spacing:-1.5px;color:#000;white-space:pre">File</div></div>
<div style="left:160px;top:3935.5px;width:5943px;height:8px;background:#EFEDE2"></div>
<svg style="left:198px;top:3841.7px;width:84px;height:98px" viewBox="0 0 84 98">
<path d="M5 5 L56 5 L79 28 L79 93 L5 93 Z" fill="#E7EAF4" stroke="#8FA3E2" stroke-width="8"/>
<path d="M56 5 L56 28 L79 28 Z" fill="#AEBBEA" stroke="#8FA3E2" stroke-width="4"/>
<path d="M22 30 L30 44 L24 60 M30 44 L46 40 M28 70 L46 62 L60 74 M50 48 L62 56" fill="none" stroke="#B4B8C6" stroke-width="7"/>
</svg>
<div class="t" style="left:309px;top:3831.7px;height:120px;line-height:120px;font-size:74px;color:#000;white-space:pre;letter-spacing:-1.96px;">msdfmap.ini</div>
<div class="t" style="left:1904px;top:3831.7px;height:120px;line-height:120px;font-size:74px;color:#000;white-space:pre;letter-spacing:-1.85px;">1, 405</div>
<div class="t" style="left:2706px;top:3831.7px;height:120px;line-height:120px;font-size:74px;color:#000;white-space:pre;letter-spacing:-1.64px;">31.12.2002</div>
<div class="t" style="left:3155px;top:3831.7px;height:120px;line-height:120px;font-size:74px;color:#000;white-space:pre;letter-spacing:-2.00px;">15:00</div>
<div class="t" style="left:3426px;top:3831.7px;height:120px;line-height:120px;font-size:74px;color:#000;white-space:pre;letter-spacing:-1.91px;">Archive</div>
<div style="left:5810px;top:3831.7px;width:194px;height:120px;overflow:hidden"><div class="t" style="left:0;top:0;height:120px;line-height:120px;font-size:74px;letter-spacing:-1.5px;color:#000;white-space:pre">File</div></div>
<div style="left:160px;top:4046.8px;width:5943px;height:8px;background:#EFEDE2"></div>
<svg style="left:198px;top:3953px;width:84px;height:98px" viewBox="0 0 84 98">
<path d="M5 5 L56 5 L79 28 L79 93 L5 93 Z" fill="#E7EAF4" stroke="#8FA3E2" stroke-width="8"/>
<path d="M56 5 L56 28 L79 28 Z" fill="#AEBBEA" stroke="#8FA3E2" stroke-width="4"/>
<path d="M22 30 L30 44 L24 60 M30 44 L46 40 M28 70 L46 62 L60 74 M50 48 L62 56" fill="none" stroke="#B4B8C6" stroke-width="7"/>
</svg>
<div class="t" style="left:309px;top:3943px;height:120px;line-height:120px;font-size:74px;color:#000;white-space:pre;letter-spacing:-2.14px;">msgsocm.log</div>
<div class="t" style="left:1904px;top:3943px;height:120px;line-height:120px;font-size:74px;color:#000;white-space:pre;letter-spacing:-2.22px;">871</div>
<div class="t" style="left:2706px;top:3943px;height:120px;line-height:120px;font-size:74px;color:#000;white-space:pre;letter-spacing:-1.09px;">30.11.2005</div>
<div class="t" style="left:3155px;top:3943px;height:120px;line-height:120px;font-size:74px;color:#000;white-space:pre;letter-spacing:-2.00px;">17:08</div>
<div class="t" style="left:3426px;top:3943px;height:120px;line-height:120px;font-size:74px;color:#000;white-space:pre;letter-spacing:-1.91px;">Archive</div>
<div style="left:5810px;top:3943px;width:194px;height:120px;overflow:hidden"><div class="t" style="left:0;top:0;height:120px;line-height:120px;font-size:74px;letter-spacing:-1.5px;color:#000;white-space:pre">File</div></div>
<div style="left:160px;top:4158.1px;width:5943px;height:8px;background:#EFEDE2"></div>
<svg style="left:198px;top:4064.3px;width:84px;height:98px" viewBox="0 0 84 98">
<path d="M5 5 L56 5 L79 28 L79 93 L5 93 Z" fill="#E7EAF4" stroke="#8FA3E2" stroke-width="8"/>
<path d="M56 5 L56 28 L79 28 Z" fill="#AEBBEA" stroke="#8FA3E2" stroke-width="4"/>
<path d="M22 30 L30 44 L24 60 M30 44 L46 40 M28 70 L46 62 L60 74 M50 48 L62 56" fill="none" stroke="#B4B8C6" stroke-width="7"/>
</svg>
<div class="t" style="left:309px;top:4054.3px;height:120px;line-height:120px;font-size:74px;color:#000;white-space:pre;letter-spacing:-1.96px;">msmqinst.log</div>
<div class="t" style="left:1904px;top:4054.3px;height:120px;line-height:120px;font-size:74px;color:#000;white-space:pre;letter-spacing:-1.91px;">10, 230</div>
<div class="t" style="left:2706px;top:4054.3px;height:120px;line-height:120px;font-size:74px;color:#000;white-space:pre;letter-spacing:-1.09px;">30.11.2005</div>
<div class="t" style="left:3155px;top:4054.3px;height:120px;line-height:120px;font-size:74px;color:#000;white-space:pre;letter-spacing:-2.00px;">17:07</div>
<div class="t" style="left:3426px;top:4054.3px;height:120px;line-height:120px;font-size:74px;color:#000;white-space:pre;letter-spacing:-1.91px;">Archive</div>
<div style="left:5810px;top:4054.3px;width:194px;height:120px;overflow:hidden"><div class="t" style="left:0;top:0;height:120px;line-height:120px;font-size:74px;letter-spacing:-1.5px;color:#000;white-space:pre">File</div></div>
<div style="left:160px;top:4269.4px;width:5943px;height:8px;background:#EFEDE2"></div>
<svg style="left:198px;top:4175.6px;width:84px;height:98px" viewBox="0 0 84 98">
<path d="M5 5 L56 5 L79 28 L79 93 L5 93 Z" fill="#E7EAF4" stroke="#8FA3E2" stroke-width="8"/>
<path d="M56 5 L56 28 L79 28 Z" fill="#AEBBEA" stroke="#8FA3E2" stroke-width="4"/>
<path d="M22 30 L30 44 L24 60 M30 44 L46 40 M28 70 L46 62 L60 74 M50 48 L62 56" fill="none" stroke="#B4B8C6" stroke-width="7"/>
</svg>
<div class="t" style="left:309px;top:4165.6px;height:120px;line-height:120px;font-size:74px;color:#000;white-space:pre;letter-spacing:-1.89px;">netfxocm.log</div>
<div class="t" style="left:1904px;top:4165.6px;height:120px;line-height:120px;font-size:74px;color:#000;white-space:pre;letter-spacing:-1.85px;">2, 790</div>
<div class="t" style="left:2706px;top:4165.6px;height:120px;line-height:120px;font-size:74px;color:#000;white-space:pre;letter-spacing:-1.09px;">30.11.2005</div>
<div class="t" style="left:3155px;top:4165.6px;height:120px;line-height:120px;font-size:74px;color:#000;white-space:pre;letter-spacing:-2.00px;">17:08</div>
<div class="t" style="left:3426px;top:4165.6px;height:120px;line-height:120px;font-size:74px;color:#000;white-space:pre;letter-spacing:-1.91px;">Archive</div>
<div style="left:5810px;top:4165.6px;width:194px;height:120px;overflow:hidden"><div class="t" style="left:0;top:0;height:120px;line-height:120px;font-size:74px;letter-spacing:-1.5px;color:#000;white-space:pre">File</div></div>
<div style="left:160px;top:4277.9px;width:5943px;height:30.1px;overflow:hidden"><svg style="left:37px;top:9px;width:84px;height:98px" viewBox="0 0 84 98"><path d="M5 5 L56 5 L79 28 L79 93 L5 93 Z" fill="#E7EAF4" stroke="#8FA3E2" stroke-width="8"/></svg></div>
<div style="left:6103px;top:1033px;width:117px;height:3275px;background:linear-gradient(to right,#F0EFE8 0%,#FBFBF8 40%,#FEFEFC 100%)"></div>
<div style="left:6110px;top:1040px;width:89px;height:101px;background:linear-gradient(to bottom,#CCDBFD 0%,#C1D2FB 55%,#B3C6F6 85%,#A2B8EE 100%);border-radius:12px"></div>
<svg style="left:6110px;top:1040px;width:89px;height:101px" viewBox="0 0 89 101"><path d="M20 63.49999999999997 L44 38.49999999999997 L68 63.49999999999997" fill="none" stroke="#44577E" stroke-width="17"/></svg>
<div style="left:6110px;top:4204px;width:89px;height:99px;background:linear-gradient(to bottom,#CCDBFD 0%,#C1D2FB 55%,#B3C6F6 85%,#A2B8EE 100%);border-radius:12px"></div>
<svg style="left:6110px;top:4204px;width:89px;height:99px" viewBox="0 0 89 99"><path d="M20 36.50000000000017 L44 61.50000000000017 L68 36.50000000000017" fill="none" stroke="#44577E" stroke-width="17"/></svg>
<div style="left:6112px;top:1962px;width:87px;height:740px;background:linear-gradient(to right,#CBDAFD 0%,#C2D3FC 50%,#B4C7F6 100%);border-radius:12px"></div>
<div style="left:6136px;top:2313px;width:42px;height:6px;background:#EEF4FE"></div>
<div style="left:6140px;top:2319.5px;width:42px;height:5px;background:#8CA4E0"></div>
<div style="left:6136px;top:2329px;width:42px;height:6px;background:#EEF4FE"></div>
<div style="left:6140px;top:2335.5px;width:42px;height:5px;background:#8CA4E0"></div>
<div style="left:6136px;top:2345px;width:42px;height:6px;background:#EEF4FE"></div>
<div style="left:6140px;top:2351.5px;width:42px;height:5px;background:#8CA4E0"></div>
<div style="left:23px;top:4460px;width:6355px;height:8px;background:#ADA997"></div>
<div style="left:23px;top:4468px;width:6355px;height:8px;background:#F8F7F0"></div>
<div style="left:23px;top:4476px;width:6355px;height:120px;background:linear-gradient(to bottom,#EFEDE0 0%,#ECE9D8 60%,#E4E0CE 100%)"></div>
<div class="t" style="left:38px;top:4471.5px;height:120px;line-height:120px;font-size:74px;color:#000;white-space:pre;letter-spacing:-1.84px;">Bytes Sent to Server:  12, 124</div>
<div class="t" style="left:1686px;top:4471.5px;height:120px;line-height:120px;font-size:74px;color:#000;white-space:pre;letter-spacing:-2.23px;">Bytes Received from Server:  1, 020, 370</div>
<div class="t" style="left:3316px;top:4471.5px;height:120px;line-height:120px;font-size:74px;color:#000;white-space:pre;letter-spacing:-1.83px;">Completed Tasks of transfers:  233</div>
<div class="t" style="left:4622px;top:4471.5px;height:120px;line-height:120px;font-size:74px;color:#000;white-space:pre;letter-spacing:-1.32px;">Last connection to Server at:  4:52:08</div>
<div style="left:1650.5px;top:4486px;width:7px;height:100px;background:#C2BEAC"></div>
<div style="left:1657.5px;top:4486px;width:7px;height:100px;background:#FFFFFF"></div>
<div style="left:3266.5px;top:4486px;width:7px;height:100px;background:#C2BEAC"></div>
<div style="left:3273.5px;top:4486px;width:7px;height:100px;background:#FFFFFF"></div>
<div style="left:4576.5px;top:4486px;width:7px;height:100px;background:#C2BEAC"></div>
<div style="left:4583.5px;top:4486px;width:7px;height:100px;background:#FFFFFF"></div>
<div style="left:6288.5px;top:4486px;width:7px;height:100px;background:#C2BEAC"></div>
<div style="left:6295.5px;top:4486px;width:7px;height:100px;background:#FFFFFF"></div>
</div>
</body></html>
